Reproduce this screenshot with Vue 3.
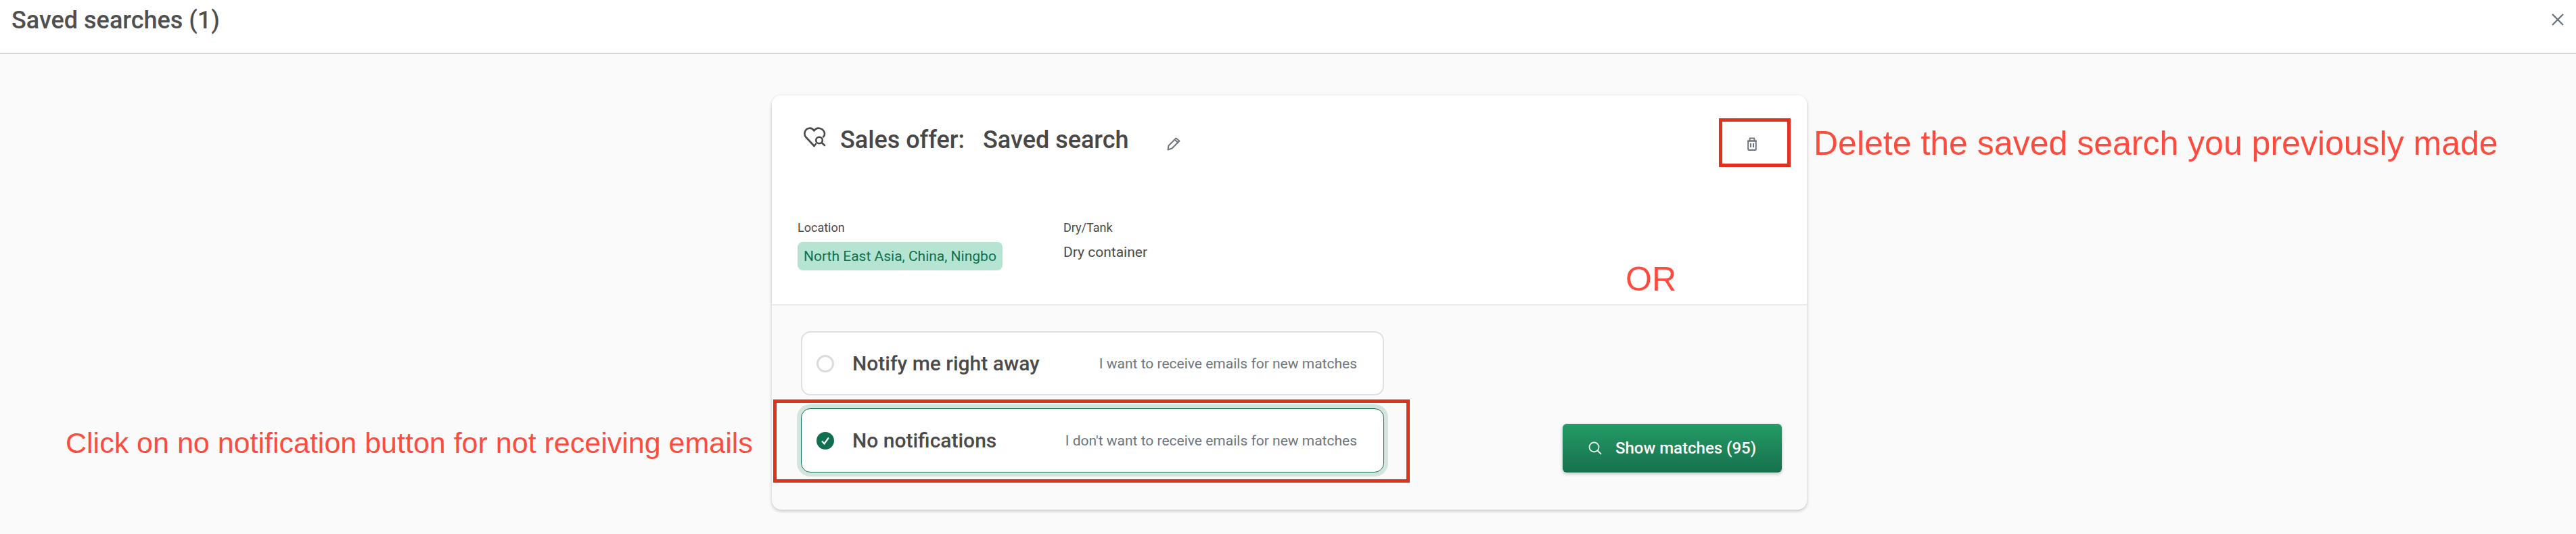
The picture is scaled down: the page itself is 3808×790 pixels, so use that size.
<template>
  <div class="page">
    <header class="topbar">
      <h1 class="page-title">Saved searches (1)</h1>
      <button class="close" aria-label="Close">
        <svg width="18" height="18" viewBox="0 0 18 18" fill="none" stroke="#6c757d" stroke-width="2.4"><path d="M1 1l16 16M17 1L1 17" /></svg>
      </button>
    </header>

    <main class="main">
      <section class="card">
        <div class="card-top">
          <div class="head">
            <svg class="heart" width="33" height="30" viewBox="0 0 33 30" fill="none" stroke="#4a4a4a" stroke-width="2.6" stroke-linecap="round" stroke-linejoin="round">
              <path d="M15.5 28L3 14.5C0 10.5 1.5 3.5 7 2c3.500-1 6.500.5 8.500 3.500C17.500 2.500 21 1 24.500 2c5 1.300 7.500 6 6 10.500l-1.500 2" />
              <path d="M15.500 28l2.500-3" />
              <circle cx="23" cy="19.500" r="4.800" />
              <path d="M26.500 23l4.500 4" />
            </svg>
            <h2 class="card-title"><span>Sales offer:</span><span>Saved search</span></h2>
            <svg class="pencil" width="20" height="20" viewBox="0 0 20 20" fill="none" stroke="#6c757d" stroke-width="2" stroke-linejoin="round">
              <path d="M1.500 18.500L2.500 12.500 13.500 1.500 18.500 5.500 7.500 16.500z" />
              <path d="M12 4l4.500 4" />
            </svg>
            <svg class="trash" width="16" height="20" viewBox="0 0 16 20" fill="none" stroke="#6c757d" stroke-width="2">
              <path d="M1 5.500h14M4 5.500L5 1.500h6l1 4" />
              <rect x="2.200" y="5.500" width="11.600" height="13.500" rx="1.500" />
              <path d="M6 9v6M10 9v6" />
            </svg>
          </div>
          <div class="fields">
            <div class="field field-loc">
              <span class="label">Location</span>
              <span class="chip">North East Asia, China, Ningbo</span>
            </div>
            <div class="field">
              <span class="label">Dry/Tank</span>
              <span class="value">Dry container</span>
            </div>
          </div>
        </div>

        <div class="card-bottom">
          <div class="options">
            <div class="option">
              <span class="radio"></span>
              <span class="opt-title">Notify me right away</span>
              <span class="opt-desc">I want to receive emails for new matches</span>
            </div>
            <div class="option selected">
              <span class="radio checked">
                <svg width="14" height="14" viewBox="0 0 14 14" fill="none" stroke="#fff" stroke-width="2.200"><path d="M2 7.500l3.500 4L12 2.500" /></svg>
              </span>
              <span class="opt-title">No notifications</span>
              <span class="opt-desc">I don't want to receive emails for new matches</span>
            </div>
          </div>
          <button class="show">
            <svg width="20" height="20" viewBox="0 0 20 20" fill="none" stroke="#e8f5ef" stroke-width="1.800"><circle cx="8.500" cy="8.500" r="7" /><path d="M13.500 13.500l5.500 5.500" /></svg>
            <span>Show matches (95)</span>
          </button>
        </div>
      </section>
    </main>

    <div class="mark mark-trash"></div>
    <div class="mark mark-option"></div>
    <p class="note note-delete">Delete the saved search you previously made</p>
    <p class="note note-or">OR</p>
    <p class="note note-click">Click on no notification button for not receiving emails</p>
  </div>
</template>

<script setup>
</script>

<style>
html, body { margin: 0; background: #fafafa; }
</style>

<style scoped>
.page {
  position: relative;
  width: 3808px;
  height: 790px;
  overflow: hidden;
  background: #fafafa;
  font-family: Roboto, "Liberation Sans", sans-serif;
  color: #4a4a4a;
}
.topbar {
  height: 78px;
  background: #fff;
  border-bottom: 2px solid #d6d6d6;
  display: flex;
  align-items: center;
  justify-content: space-between;
  padding: 0 18px 0 17px;
}
.page-title {
  margin: 0 0 18px;
  font-size: 36px;
  font-weight: 500;
  line-height: 40px;
  color: #4f4f4f;
}
.close {
  border: 0;
  padding: 0;
  background: none;
  display: flex;
  margin-bottom: 21px;
}
.main {
  display: flex;
  justify-content: center;
  padding: 61px 0 0 4px;
}
.card {
  width: 1530px;
  height: 613px;
  border-radius: 14px;
  background: #fafafa;
  box-shadow: 0 2px 5px rgba(0, 0, 0, 0.22);
  overflow: hidden;
  display: flex;
  flex-direction: column;
}
.card-top {
  height: 311px;
  box-sizing: border-box;
  background: #fff;
  border-bottom: 2px solid #ececec;
  flex: none;
  display: flex;
  flex-direction: column;
  padding: 47px 37px 0 38px;
}
.head {
  display: flex;
  align-items: flex-start;
  height: 139px;
  padding-left: 9px;
}
.heart { flex: none; }
.card-title {
  margin: -2px 0 0 21px;
  display: flex;
  gap: 27px;
  font-size: 36px;
  font-weight: 500;
  line-height: 42px;
  color: #474747;
}
.pencil { margin: 15px 0 0 56px; flex: none; }
.trash { margin: 15px 36px 0 auto; flex: none; }
.fields {
  display: flex;
}
.field {
  display: flex;
  flex-direction: column;
  align-items: flex-start;
}
.field-loc { width: 393px; }
.label {
  font-size: 18px;
  line-height: 20px;
  color: #4a4a4a;
}
.chip {
  margin-top: 11px;
  height: 42px;
  line-height: 42px;
  padding: 0 9px;
  border-radius: 8px;
  background: #b5e4d2;
  color: #0f7050;
  font-size: 21px;
}
.value {
  margin-top: 10px;
  font-size: 21px;
  line-height: 32px;
  color: #4a4a4a;
}
.card-bottom {
  flex: 1;
  display: flex;
  align-items: flex-end;
  justify-content: space-between;
  padding: 38px 37px 55px 43px;
}
.options {
  display: flex;
  flex-direction: column;
  gap: 19px;
  width: 862px;
}
.option {
  height: 95px;
  box-sizing: border-box;
  border: 2px solid #e0e0e0;
  border-radius: 14px;
  background: #fff;
  display: flex;
  align-items: center;
  padding: 0 38px 0 21px;
}
.option.selected {
  border: 1px solid #0f6f4f;
  padding: 0 39px 0 22px;
  box-shadow: 0 0 0 6px #d3e5dd;
}
.radio {
  width: 26px;
  height: 26px;
  box-sizing: border-box;
  border: 3px solid #dcdcdc;
  border-radius: 50%;
  flex: none;
  display: flex;
  align-items: center;
  justify-content: center;
}
.radio.checked {
  border: 0;
  background: #0f6f4f;
}
.opt-title {
  margin-left: 27px;
  font-size: 30px;
  font-weight: 500;
  color: #4a4a4a;
}
.opt-desc {
  margin-left: auto;
  font-size: 21px;
  color: #6c757d;
}
.show {
  width: 324px;
  height: 72px;
  border: 0;
  border-radius: 6px;
  background: linear-gradient(#239b66, #17704d);
  box-shadow: 0 2px 5px rgba(0, 0, 0, 0.25);
  color: #fff;
  font-family: Roboto, "Liberation Sans", sans-serif;
  font-size: 24px;
  font-weight: 500;
  display: flex;
  align-items: center;
  justify-content: center;
  gap: 20px;
  padding: 0;
}
.mark {
  position: absolute;
  box-sizing: border-box;
  border: 5px solid #e0301e;
}
.mark-trash { left: 2541px; top: 175px; width: 106px; height: 72px; }
.mark-option { left: 1143px; top: 591px; width: 941px; height: 123px; }
.note {
  position: absolute;
  margin: 0;
  font-family: "Liberation Sans", Arial, sans-serif;
  font-size: 50px;
  line-height: 56px;
  color: #ff4b3e;
  white-space: nowrap;
}
.note-delete { left: 2681px; top: 184px; }
.note-or { left: 2403px; top: 385px; }
.note-click { left: 97px; top: 627px; font-size: 43px; }
</style>
